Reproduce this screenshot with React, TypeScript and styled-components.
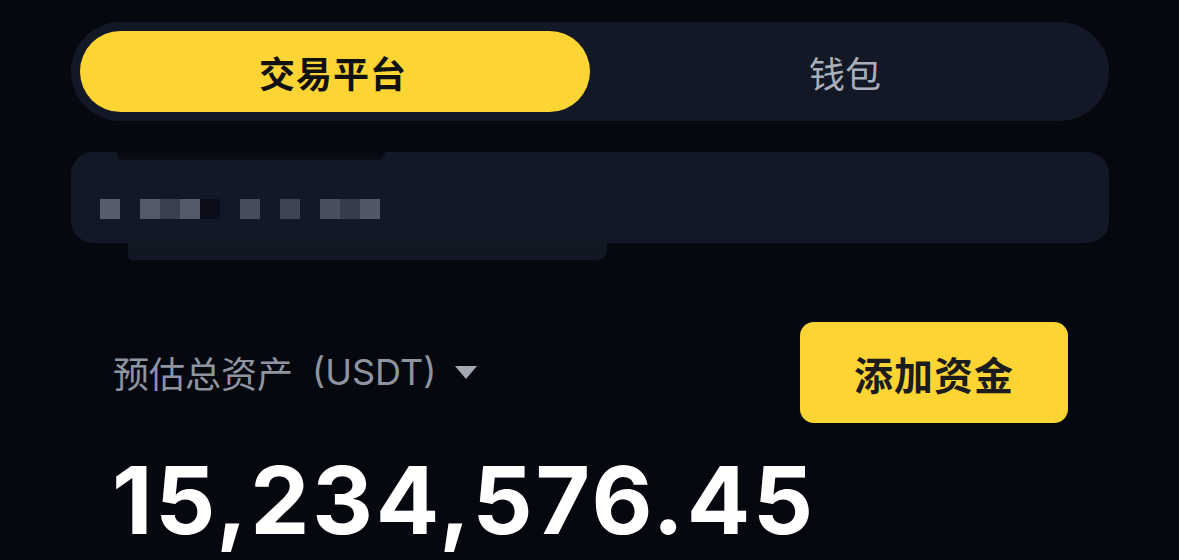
import React from "react";
import styled, { createGlobalStyle } from "styled-components";

const Global = createGlobalStyle`
  html, body { margin: 0; padding: 0; background: #05080f; }
  body { font-family: Inter, "Noto Sans CJK SC", sans-serif; }
`;

const Page = styled.div`
  width: 1179px;
  height: 560px;
  overflow: hidden;
  box-sizing: border-box;
  padding: 22px 70px 0 71px;
  background: #05080f;
  display: flex;
  flex-direction: column;
`;

const TabBar = styled.div`
  height: 99px;
  box-sizing: border-box;
  padding: 9px;
  border-radius: 50px;
  background: #121825;
  display: grid;
  grid-template-columns: 1fr 1fr;
`;

const Tab = styled.div<{ $active?: boolean }>`
  border-radius: 41px;
  display: flex;
  align-items: center;
  justify-content: center;
  font-family: "Noto Sans CJK SC", sans-serif;
  font-size: 36px;
  font-weight: ${(p) => (p.$active ? 700 : 400)};
  color: ${(p) => (p.$active ? "#111111" : "#a9afba")};
  background: ${(p) => (p.$active ? "#fcd535" : "transparent")};
  letter-spacing: ${(p) => (p.$active ? "1px" : "0")};
  padding-right: ${(p) => (p.$active ? "4px" : "0")};
`;

const CardWrap = styled.div`
  margin-top: 31px;
  display: flex;
  flex-direction: column;
`;

const Card = styled.div`
  position: relative;
  height: 91px;
  border-radius: 22px;
  background: #121826;
  display: flex;
  align-items: center;
  padding-left: 29px;
  padding-top: 22px;
  box-sizing: border-box;
`;

const Notch = styled.div`
  position: absolute;
  top: 0;
  left: 46px;
  width: 268px;
  height: 8px;
  background: linear-gradient(#05080f, #0b0f1a);
  border-bottom-left-radius: 8px;
  border-bottom-right-radius: 10px;
`;

const Lip = styled.div`
  margin-left: 57px;
  width: 479px;
  height: 17px;
  background: #111723;
  border-bottom-left-radius: 4px;
  border-bottom-right-radius: 10px;
`;

const Mosaic = styled.div`
  display: flex;
`;

const Pixel = styled.div<{ $c: string }>`
  width: 20px;
  height: 20px;
  background: ${(p) => p.$c};
`;

const Asset = styled.div`
  margin-top: 62px;
  padding: 0 41px 0 42px;
  display: flex;
  flex-direction: column;
`;

const AssetRow = styled.div`
  display: flex;
  align-items: center;
  justify-content: space-between;
`;

const Label = styled.div`
  display: flex;
  align-items: center;
  font-family: Inter, "Noto Sans CJK SC", sans-serif;
  font-size: 36px;
  color: #8f95a0;
  margin-top: -2px;
`;

const LabelCjk = styled.span`
  font-family: "Noto Sans CJK SC", sans-serif;
  margin-right: 19px;
`;

const Caret = styled.svg`
  margin-left: 19px;
  margin-top: 2px;
  width: 22px;
  height: 13px;
`;

const AddButton = styled.button`
  width: 268px;
  height: 101px;
  border: none;
  border-radius: 14px;
  background: #fcd535;
  color: #1c1c1c;
  font-family: "Noto Sans CJK SC", sans-serif;
  font-size: 39px;
  font-weight: 700;
  letter-spacing: 1px;
  display: flex;
  align-items: center;
  justify-content: center;
  padding: 0;
`;

const Amount = styled.div`
  margin-top: 22px;
  font-family: Inter, "Liberation Sans", sans-serif;
  font-weight: 700;
  font-size: 94px;
  line-height: 110px;
  letter-spacing: 2.8px;
  color: #ffffff;
  margin-left: -1px;
`;

const pixels = [
  "#585d6c",
  "#121826",
  "#555a69",
  "#3b4050",
  "#555a69",
  "#0a0e1a",
  "#121826",
  "#474c5b",
  "#121826",
  "#3f4453",
  "#121826",
  "#4a4f5e",
  "#373c4b",
  "#525766",
];

export default function App() {
  return (
    <>
      <Global />
      <Page>
        <TabBar>
          <Tab $active>交易平台</Tab>
          <Tab>钱包</Tab>
        </TabBar>
        <CardWrap>
          <Card>
            <Notch />
            <Mosaic>
              {pixels.map((c, i) => (
                <Pixel key={i} $c={c} />
              ))}
            </Mosaic>
          </Card>
          <Lip />
        </CardWrap>
        <Asset>
          <AssetRow>
            <Label>
              <LabelCjk>预估总资产</LabelCjk>
              (USDT)
              <Caret viewBox="0 0 22 13">
                <path d="M0 0 H22 L11 13 Z" fill="#a3a9b3" />
              </Caret>
            </Label>
            <AddButton>添加资金</AddButton>
          </AssetRow>
          <Amount>15,234,576.45</Amount>
        </Asset>
      </Page>
    </>
  );
}
